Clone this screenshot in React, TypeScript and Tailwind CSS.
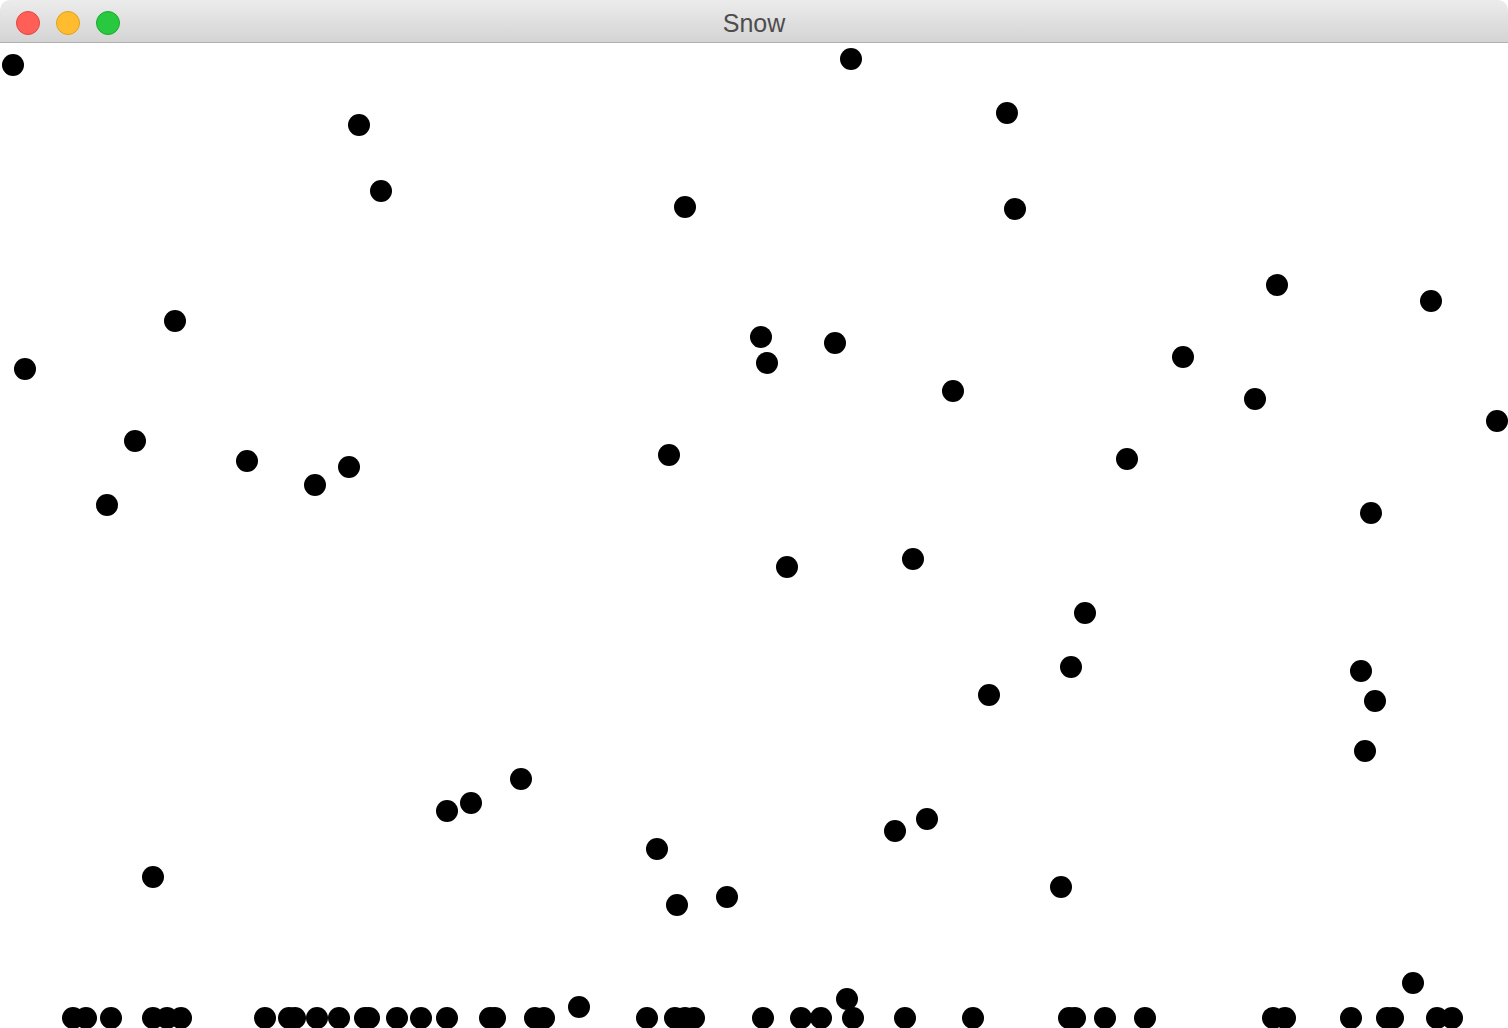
import React from 'react';

// snowflake centres, page coordinates
const flakes: [number, number][] = [
  [12.5, 64.5], [850.5, 58.5], [358.5, 124.5], [1006.5, 112.5], [380.5, 190.5],
  [684.5, 206.5], [1014.5, 208.5], [1276.5, 284.5], [1430.5, 300.5], [174.5, 320.5],
  [760.5, 336.5], [834.5, 342.5], [766.5, 362.5], [24.5, 368.5], [1182.5, 356.5],
  [952.5, 390.5], [1254.5, 398.5], [1496.5, 420.5], [134.5, 440.5], [246.5, 460.5],
  [348.5, 466.5], [668.5, 454.5], [1126.5, 458.5], [314.5, 484.5], [106.5, 504.5],
  [1370.5, 512.5], [786.5, 566.5], [912.5, 558.5], [1084.5, 612.5], [1070.5, 666.5],
  [1360.5, 670.5], [988.5, 694.5], [1374.5, 700.5], [1364.5, 750.5], [520.5, 778.5],
  [470.5, 802.5], [446.5, 810.5], [926.5, 818.5], [894.5, 830.5], [656.5, 848.5],
  [152.5, 876.5], [1060.5, 886.5], [726.5, 896.5], [676.5, 904.5],
  [579, 1007], [847, 999], [1413, 983],
];

// flakes that already landed
const ground = [
  73, 86, 111, 153, 167, 181, 265, 289, 295, 317, 339, 365, 369, 397, 421, 447,
  490, 495, 535, 544, 647, 675, 685, 694, 763, 801, 821, 853, 905, 973, 1069, 1075,
  1105, 1145, 1273, 1285, 1351, 1387, 1393, 1437, 1452,
];

const TOP = 43;

const Light = ({ fill, edge }: { fill: string; edge: string }) => (
  <div className={`w-6 h-6 rounded-full border ${fill} ${edge}`} />
);

export default function App() {
  return (
    <div className="w-[1508px] h-[1028px] bg-white flex flex-col overflow-hidden">
      <div className="relative h-[43px] shrink-0 rounded-t-[10px] bg-gradient-to-b from-[#ececec] to-[#d4d4d4] border-b border-[#b1b1b1] flex items-center">
        <div className="flex items-center gap-4 pl-4 pt-[3px]">
          <Light fill="bg-[#ff5f57]" edge="border-[#e2463f]" />
          <Light fill="bg-[#febc2e]" edge="border-[#e1a116]" />
          <Light fill="bg-[#28c840]" edge="border-[#1aab29]" />
        </div>
        <div className="absolute inset-0 flex items-center justify-center pt-[6px]">
          <span className="text-[25px] text-[#4d4d4d]" style={{ fontFamily: '"Liberation Sans", Arial, sans-serif' }}>
            Snow
          </span>
        </div>
      </div>
      <div className="relative flex-1 overflow-hidden">
        {flakes.map(([x, y], i) => (
          <div
            key={'f' + i}
            className="absolute w-[22px] h-[22px] rounded-full bg-black"
            style={{ left: x - 11, top: y - 11 - TOP }}
          />
        ))}
        {ground.map((x, i) => (
          <div
            key={'g' + i}
            className="absolute w-[22px] h-[22px] rounded-full bg-black"
            style={{ left: x - 11, top: 1018 - 11 - TOP }}
          />
        ))}
      </div>
    </div>
  );
}
